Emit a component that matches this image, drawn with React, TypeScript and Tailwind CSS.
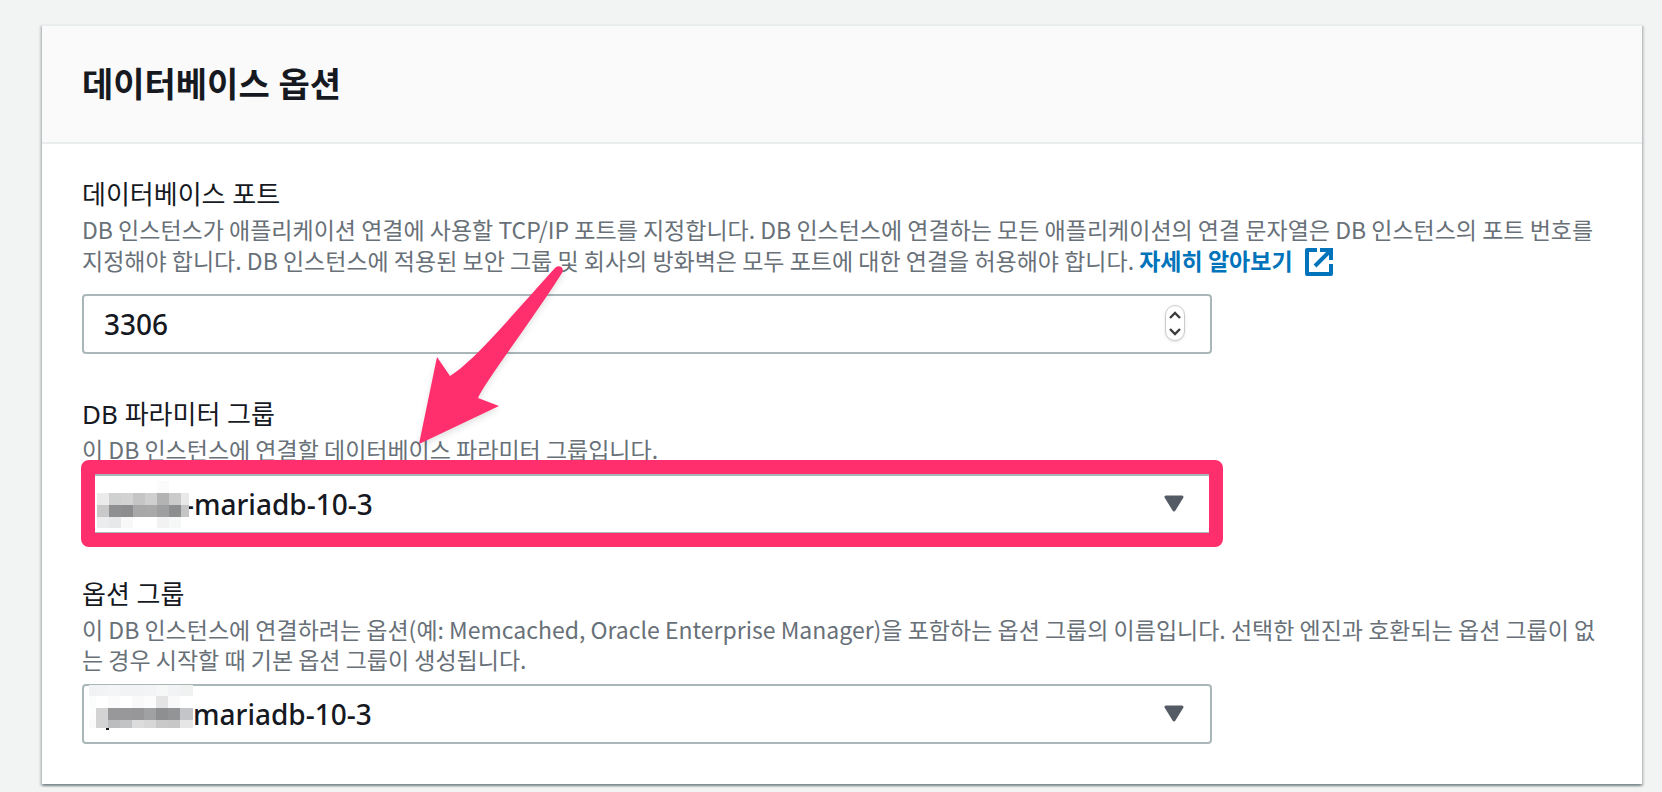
import { useState } from "react";
import type { ReactNode } from "react";

type Cell = [number, number, number, number, string];

function Mosaic({ cells, width, height }: { cells: Cell[]; width: number; height: number }) {
  return (
    <svg width={width} height={height} viewBox={`0 0 ${width} ${height}`} shapeRendering="crispEdges" aria-hidden="true">
      {cells.map(([x, y, w, h, fill], i) => (
        <rect key={i} x={x} y={y} width={w} height={h} fill={fill} />
      ))}
    </svg>
  );
}

const row = (y: number, h: number, colors: string[], xs: number[]): Cell[] =>
  colors.map((c, i) => [xs[i], y, xs[i + 1] - xs[i], h, c]);

const xsA = [0, 12, 24, 36, 48, 60, 72, 84, 92];
const parameterCells: Cell[] = [
  ...row(0, 12, ["#fff", "#fff", "#fff", "#fff", "#fff", "#fbfbfb", "#fff", "#fff"], xsA),
  ...row(12, 12, ["#ebebeb", "#cfd0d0", "#d3d3d3", "#c5c5c6", "#cfcfd0", "#b3b3b4", "#cbcbcc", "#e9e9ea"], xsA),
  ...row(24, 12, ["#c9c9ca", "#8f9092", "#8d8d8f", "#a8a8a9", "#a9a9aa", "#9e9fa1", "#8c8d8f", "#c5c5c6"], xsA),
  ...row(36, 11, ["#ebeced", "#e7e8ea", "#f8f8f8", "#fff", "#fff", "#f2f2f3", "#f6f7f7", "#fff"], xsA),
];

const xsB = [0, 7, 19, 31, 43, 55, 67, 79, 91, 104];
const optionCells: Cell[] = [
  ...row(0, 11, ["#f1f2f3", "#f2f3f4", "#f4f5f6", "#f2f3f5", "#f2f3f5", "#f3f4f5", "#f6f8f7", "#f2f3f5", "#f0f2f2"], xsB),
  ...row(11, 12, ["#fbfcfc", "#fff", "#fbfbfb", "#fff", "#f9f9fa", "#fcfcfc", "#e4e4e5", "#f9f9fa", "#fff"], xsB),
  ...row(23, 12, ["#fdfdfd", "#d3d3d4", "#98989a", "#98989a", "#979799", "#a0a1a3", "#8e8f91", "#939496", "#c4c5c8"], xsB),
  ...row(35, 8, ["#fafafa", "#d3d3d4", "#bcbdbf", "#c2c3c4", "#dcdcdd", "#d7d7d8", "#c9c9ca", "#c7c7c8", "#e6e6e7"], xsB),
  [17, 43, 3, 2, "#16191f"],
];

function Field({ id, label, description, children }: { id: string; label: string; description: ReactNode; children: ReactNode }) {
  return (
    <div>
      <label htmlFor={id} className="block text-[26px] leading-9 text-[#16191f]">
        {label}
      </label>
      <p className="mt-[2px] mb-[10px] break-all font-['Noto_Sans_CJK_KR',sans-serif] text-[23px] leading-[30px] text-[#687078]">
        {description}
      </p>
      <div className="relative w-full max-w-[1130px]">{children}</div>
    </div>
  );
}

const controlClass =
  "block h-[60px] w-full appearance-none rounded-sm border-2 border-[#aab7b8] bg-white text-[28px] font-medium text-[#16191f] outline-none";

function Triangle() {
  return (
    <svg className="pointer-events-none absolute top-[21px] right-7" width="20" height="18" viewBox="0 0 20 18" aria-hidden="true">
      <path d="M2 2H18L10 15Z" fill="#545b64" stroke="#545b64" strokeWidth="3" strokeLinejoin="round" />
    </svg>
  );
}

export default function App() {
  const [port, setPort] = useState(3306);
  return (
    <main className="min-h-screen bg-[#f2f3f3] pt-6 pr-5 pb-2 pl-[42px] font-['Noto_Sans','Noto_Sans_CJK_KR',sans-serif]">
      <section className="border-t-2 border-[#eaeded] bg-white shadow-[0_2px_2px_0_rgba(0,28,36,0.3),2px_2px_2px_0_rgba(0,28,36,0.15),-2px_2px_2px_0_rgba(0,28,36,0.15)]">
        <header className="border-b-2 border-[#eaeded] bg-[#fafafa] px-10 py-[35px]">
          <h2 className="text-[34px] leading-[46px] font-bold text-[#16191f]">데이터베이스 옵션</h2>
        </header>
        <div className="flex flex-col gap-[42px] px-10 pt-8 pb-10">
          <Field
            id="port"
            label="데이터베이스 포트"
            description={
              <>
                DB 인스턴스가 애플리케이션 연결에 사용할 TCP/IP 포트를 지정합니다. DB 인스턴스에 연결하는 모든 애플리케이션의 연결 문자열은 DB 인스턴스의 포트 번호를
                지정해야 합니다. DB 인스턴스에 적용된 보안 그룹 및 회사의 방화벽은 모두 포트에 대한 연결을 허용해야 합니다.{" "}
                <a href="#learn-more" className="font-bold text-[#0073bb]">
                  자세히 알아보기
                  <svg className="mt-1 mb-2 ml-3 inline-block" width="28" height="28" viewBox="0 0 28 28" fill="none" stroke="#0073bb" strokeWidth="4" aria-hidden="true">
                    <path d="M12 2H2V26H26V16" strokeLinejoin="round" />
                    <path d="M15 2H26V12M25 3L10 18" />
                  </svg>
                </a>
              </>
            }
          >
            <input
              id="port"
              type="text"
              inputMode="numeric"
              value={port}
              onChange={(e) => setPort(Number(e.target.value) || 0)}
              className={`${controlClass} px-5`}
            />
            <div className="absolute top-[11px] right-[27px] flex h-9 w-5 flex-col overflow-hidden rounded-full border border-[#cccccc] bg-white text-[#3c3c3c] shadow-sm">
              <button type="button" aria-label="증가" onClick={() => setPort(port + 1)} className="flex flex-1 items-center justify-center">
                <svg width="12" height="8" viewBox="0 0 12 8" fill="none" stroke="currentColor" strokeWidth="2.4" aria-hidden="true">
                  <path d="M1 7L6 2L11 7" />
                </svg>
              </button>
              <button type="button" aria-label="감소" onClick={() => setPort(port - 1)} className="flex flex-1 items-center justify-center">
                <svg width="12" height="8" viewBox="0 0 12 8" fill="none" stroke="currentColor" strokeWidth="2.4" aria-hidden="true">
                  <path d="M1 1L6 6L11 1" />
                </svg>
              </button>
            </div>
            <svg className="pointer-events-none absolute -top-8 left-[332px] z-10 drop-shadow-md" width="160" height="190" viewBox="0 0 160 190" aria-hidden="true">
              <path
                d="M5 182L23 95L36 114C60 99 92 60 141 6C145 2 151 6 148 11C117 60 72 118 64 136L85 144Z"
                fill="#ff2e6c"
              />
            </svg>
          </Field>

          <Field id="parameter-group" label="DB 파라미터 그룹" description="이 DB 인스턴스에 연결할 데이터베이스 파라미터 그룹입니다.">
            <select id="parameter-group" className={`${controlClass} pl-[101px]`}>
              <option>-mariadb-10-3</option>
            </select>
            <div className="pointer-events-none absolute top-[7px] left-[15px]">
              <Mosaic cells={parameterCells} width={92} height={47} />
            </div>
            <Triangle />
            <div className="pointer-events-none absolute -top-[14px] -right-[11px] -bottom-[13px] -left-px rounded-lg border-14 border-[#ff2e6c]" />
          </Field>

          <Field
            id="option-group"
            label="옵션 그룹"
            description="이 DB 인스턴스에 연결하려는 옵션(예: Memcached, Oracle Enterprise Manager)을 포함하는 옵션 그룹의 이름입니다. 선택한 엔진과 호환되는 옵션 그룹이 없는 경우 시작할 때 기본 옵션 그룹이 생성됩니다."
          >
            <select id="option-group" className={`${controlClass} pl-[109px]`}>
              <option>mariadb-10-3</option>
            </select>
            <div className="pointer-events-none absolute top-px left-[7px]">
              <Mosaic cells={optionCells} width={104} height={45} />
            </div>
            <Triangle />
          </Field>
        </div>
      </section>
    </main>
  );
}
